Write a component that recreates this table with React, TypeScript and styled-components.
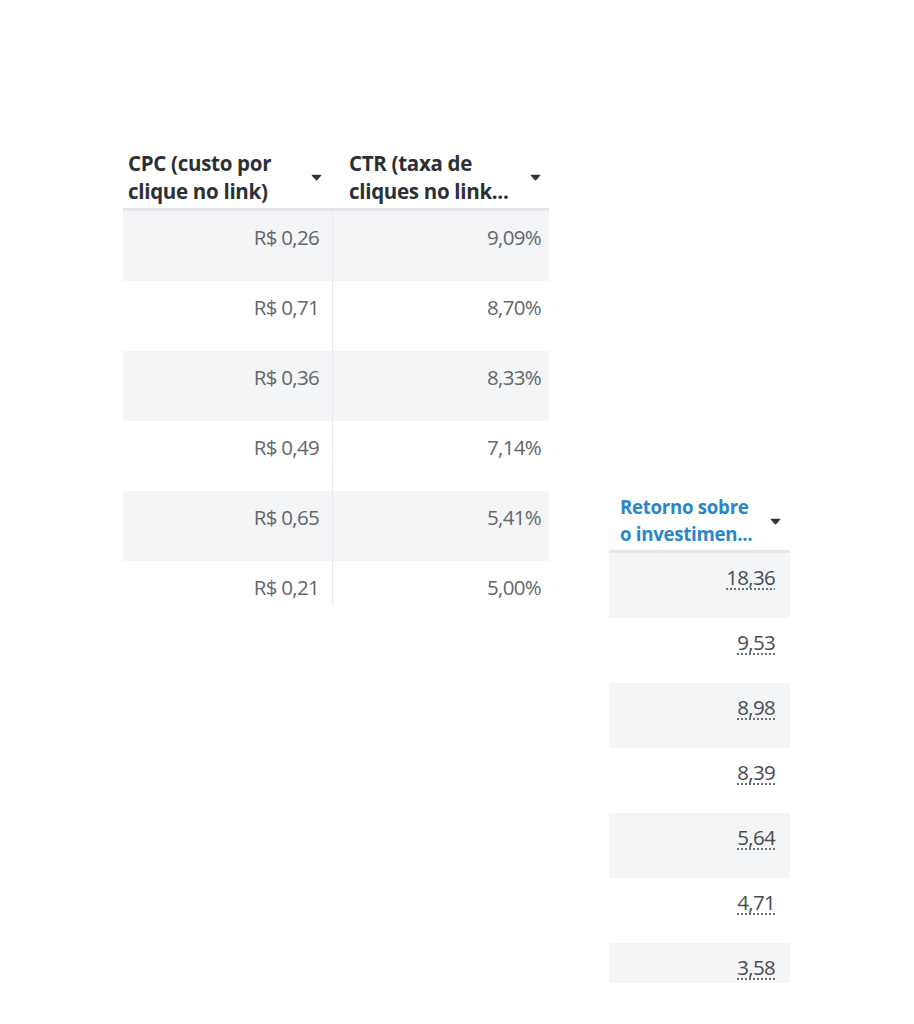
import React from "react";
import styled, { createGlobalStyle } from "styled-components";

const Global = createGlobalStyle`
  html, body { margin: 0; padding: 0; background: #ffffff; }
  body { font-family: "Open Sans", "Noto Sans", sans-serif; }
`;

const Page = styled.div`
  width: 914px;
  height: 1024px;
  display: flex;
  align-items: flex-start;
  padding: 145px 0 0 123px;
  box-sizing: border-box;
  gap: 60px;
`;

const Table = styled.div<{ $width: number; $offset?: number }>`
  width: ${(p) => p.$width}px;
  margin-top: ${(p) => p.$offset ?? 0}px;
  display: flex;
  flex-direction: column;
`;

const HeaderRow = styled.div<{ $height: number }>`
  display: grid;
  grid-template-columns: var(--cols);
  height: ${(p) => p.$height}px;
  border-bottom: 3px solid #e4e6e9;
`;

const HeaderCell = styled.div<{ $padL: number; $padR: number; $blue?: boolean; $lh: number; $size: number }>`
  display: flex;
  align-items: center;
  justify-content: space-between;
  padding: 0 ${(p) => p.$padR}px 0 ${(p) => p.$padL}px;
  font-family: "Open Sans", "Noto Sans", sans-serif;
  font-weight: 700;
  font-size: ${(p) => p.$size}px;
  line-height: ${(p) => p.$lh}px;
  color: ${(p) => (p.$blue ? "#2a86c8" : "#2b3035")};
  letter-spacing: -0.3px;
`;

const HeaderText = styled.div`
  white-space: pre-line;
`;

const Caret = styled.svg`
  flex: none;
  width: 11px;
  height: 7px;
  margin-top: 2px;
`;

const Row = styled.div<{ $height: number; $shade: boolean }>`
  display: grid;
  grid-template-columns: var(--cols);
  height: ${(p) => p.$height}px;
  background: ${(p) => (p.$shade ? "#f4f5f7" : "#ffffff")};
`;

const Cell = styled.div<{ $padR: number; $padT: number; $divider?: boolean }>`
  text-align: right;
  padding: ${(p) => p.$padT}px ${(p) => p.$padR}px 0 0;
  border-right: ${(p) => (p.$divider ? "1px solid #e8eaed" : "none")};
  font-family: "Open Sans", "Noto Sans", sans-serif;
  font-size: 20.5px;
  line-height: 22px;
  color: #62676c;
  letter-spacing: -0.7px;
`;

const RoiValue = styled.span`
  font-family: "Open Sans", "Noto Sans", sans-serif;
  font-size: 20.5px;
  color: #474c52;
  text-decoration: underline dotted #6a6f74;
  text-underline-offset: 3px;
  letter-spacing: -0.7px;
`;

const CaretIcon = () => (
  <Caret viewBox="0 0 11 7">
    <path d="M1.2 0.8 H9.8 Q10.8 0.8 10.1 1.7 L6.3 6 Q5.5 6.8 4.7 6 L0.9 1.7 Q0.2 0.8 1.2 0.8 Z" fill="#2e3338" />
  </Caret>
);

const cpc = [
  ["R$ 0,26", "9,09%"],
  ["R$ 0,71", "8,70%"],
  ["R$ 0,36", "8,33%"],
  ["R$ 0,49", "7,14%"],
  ["R$ 0,65", "5,41%"],
  ["R$ 0,21", "5,00%"],
];

const roi = ["18,36", "9,53", "8,98", "8,39", "5,64", "4,71", "3,58"];

export default function App() {
  return (
    <>
      <Global />
      <Page>
        <Table $width={426} style={{ ["--cols" as any]: "210px 216px" }}>
          <HeaderRow $height={63}>
            <HeaderCell $padL={5} $padR={11} $lh={28} $size={20.5}>
              <HeaderText>{"CPC (custo por\nclique no link)"}</HeaderText>
              <CaretIcon />
            </HeaderCell>
            <HeaderCell $padL={16} $padR={8} $lh={28} $size={20.5}>
              <HeaderText>{"CTR (taxa de\ncliques no link..."}</HeaderText>
              <CaretIcon />
            </HeaderCell>
          </HeaderRow>
          {cpc.map(([a, b], i) => (
            <Row key={i} $height={i === cpc.length - 1 ? 45 : 70} $shade={i % 2 === 0}>
              <Cell $padR={13} $padT={15} $divider>
                {a}
              </Cell>
              <Cell $padR={8} $padT={15}>
                {b}
              </Cell>
            </Row>
          ))}
        </Table>
        <Table $width={181} $offset={345} style={{ ["--cols" as any]: "181px" }}>
          <HeaderRow $height={60}>
            <HeaderCell $padL={11} $padR={9} $blue $lh={27} $size={18.7}>
              <HeaderText>{"Retorno sobre\no investimen..."}</HeaderText>
              <CaretIcon />
            </HeaderCell>
          </HeaderRow>
          {roi.map((v, i) => (
            <Row key={i} $height={i === roi.length - 1 ? 40 : 65} $shade={i % 2 === 0}>
              <Cell $padR={15} $padT={13}>
                <RoiValue>{v}</RoiValue>
              </Cell>
            </Row>
          ))}
        </Table>
      </Page>
    </>
  );
}
